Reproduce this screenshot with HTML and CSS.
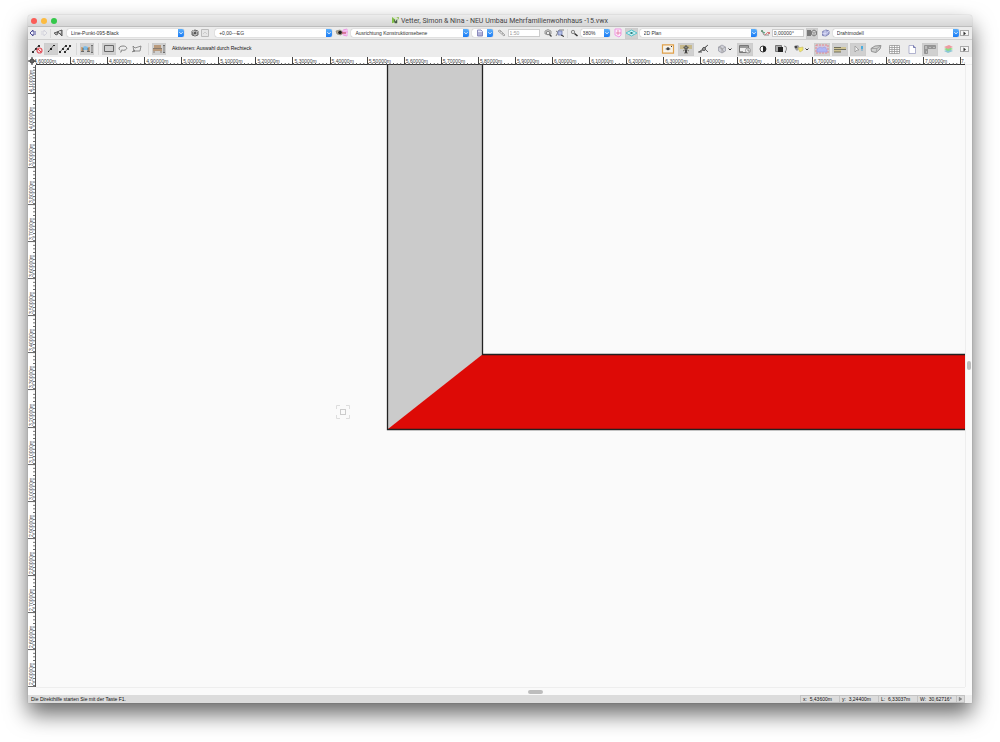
FILE: index.html
```
<!DOCTYPE html>
<html lang="de">
<head>
<meta charset="utf-8">
<title>Vetter, Simon &amp; Nina - NEU Umbau Mehrfamilienwohnhaus -15.vwx</title>
<link rel="stylesheet" href="styles.css">
</head>
<body>
<main class="window">
  <header class="titlebar">
    <div class="lights">
      <button class="light close" aria-label="Schließen"></button>
      <button class="light minimize" aria-label="Minimieren"></button>
      <button class="light maximize" aria-label="Vergrößern"></button>
    </div>
    <h1 class="title">
      <svg class="file-icon" viewBox="0 0 8 8"><path d="M0 0H6L8 2V8H0Z" fill="#dfe6d5"/><path d="M0 0L4 3L3 6L0 7Z" fill="#7fbe45"/><path d="M2 2L4 5L6 2V7H3Z" fill="#46584a"/><path d="M5 0L8 3V0Z" fill="#9ec46d"/></svg>
      <span>Vetter, Simon &amp; Nina - NEU Umbau Mehrfamilienwohnhaus -15.vwx</span>
    </h1>
  </header>

  <nav class="bar view-bar" aria-label="Darstellung">
    <button class="tool" aria-label="Zurück"><svg viewBox="0 0 10 10"><path d="M8 4H5V2L2 5L5 8V6H8" fill="#f3f3ff" stroke="#4b4b92"/></svg></button>
    <button class="tool" aria-label="Vor"><svg viewBox="0 0 10 10"><path d="M2 4H5V2L8 5L5 8V6H2" fill="#eee" stroke="#d3d3dc"/></svg></button>
    <span class="line"></span>
    <button class="tool w12" aria-label="Klassen"><svg viewBox="0 0 12 10"><path d="M2 5L5 4L6 6L4 7Z" fill="#aaa" stroke="#666"/><path d="M5 4L10 2V8L7 5Z" fill="#999" stroke="#555"/><circle cx="8" cy="4" r="1" fill="#eee"/></svg></button>
    <label class="combo wide after-m"><select aria-label="Klasse"><option>Line-Punkt-095-Black</option></select><span class="arrow"><svg viewBox="0 0 6 8"><path d="M1.500 3.300L3 4.800L4.500 3.300" fill="none" stroke="#fff"/></svg></span></label>
    <button class="tool after-l" aria-label="Ebenen"><svg viewBox="0 0 10 10"><path d="M5 2L8 3V7L5 8L2 7V3Z" fill="#999" stroke="#666"/><path d="M2 3L5 5L8 3M5 5V8M3 2L7 7" fill="none" stroke="#ddd" stroke-width=".7"/><circle cx="5" cy="5" r="1" fill="#333"/></svg></button>
    <button class="tool w8" aria-label="Ebene wählen"><svg viewBox="0 0 8 10"><path d="M.5 1.500H7.500V8.500H.5Z" fill="#e6e6e6" stroke="#bbb"/><path d="M2 6L4 4L6 6" fill="none" stroke="#ccc"/></svg></button>
    <label class="combo wide after-l"><select aria-label="Ebene"><option>+0,00---EG</option></select><span class="arrow"><svg viewBox="0 0 6 8"><path d="M1.500 3.300L3 4.800L4.500 3.300" fill="none" stroke="#fff"/></svg></span></label>
    <button class="tool w14 after-m" aria-label="Arbeitsebene"><svg viewBox="0 0 14 10"><path d="M1 3L5 2L8 4L6 7L2 6Z" fill="#b7a58c" stroke="#887" stroke-width=".7"/><circle cx="5" cy="4.500" r="1.800" fill="#222"/><path d="M8 2L12 1V8L8 7ZM7 4H13M10 1V8" fill="#fbe6fa" stroke="#ee8fe2" stroke-width=".8"/><path d="M7 5H11" stroke="#a22" stroke-width=".8"/></svg></button>
    <label class="combo wide after-s"><select aria-label="Ausrichtung"><option>Ausrichtung Konstruktionsebene</option></select><span class="arrow"><svg viewBox="0 0 6 8"><path d="M1.500 3.300L3 4.800L4.500 3.300" fill="none" stroke="#fff"/></svg></span></label>
    <button class="combo page-menu after-m" aria-label="Plan"><svg class="page" viewBox="0 0 8 8"><path d="M1.500 1H5L6.500 2.500V7H1.500Z" fill="#e5e6fa" stroke="#8a8abc"/><path d="M2 4H6M2 6H6" stroke="#6a6aa8" stroke-width=".8"/></svg><span class="arrow"><svg viewBox="0 0 6 8"><path d="M1.500 3.300L3 4.800L4.500 3.300" fill="none" stroke="#fff"/></svg></span></button>
    <button class="tool w11 after-m" aria-label="Maßstab"><svg viewBox="0 0 11 10"><path d="M2 3L4 2L9 7L8 8Z" fill="#ddd" stroke="#aaa"/><path d="M4 4L5 3M6 6L7 5" stroke="#999" stroke-width=".7"/></svg></button>
    <input class="field faded" aria-label="Maßstab" value="1:50">
    <button class="tool after-m" aria-label="Zoom Objekt"><svg viewBox="0 0 10 10"><path d="M2 3L5 1.500L8 3V6H2Z" fill="#ddd" stroke="#999"/><circle cx="5" cy="5" r="1.800" fill="#eee" stroke="#666" stroke-width=".8"/><path d="M6.500 6.500L8.500 8.500" stroke="#444" stroke-width="1.300"/></svg></button>
    <button class="tool w12" aria-label="Zoom Auswahl"><svg viewBox="0 0 12 10"><path d="M2 8L5 2L10 2M2 3L9 8" fill="none" stroke="#666" stroke-width=".8"/><path d="M4 3H8V7H4Z" fill="#b4bfe6" stroke="#7480b5" stroke-width=".8"/><path d="M7 7L10 8.500" stroke="#333"/></svg></button>
    <span class="line"></span>
    <button class="tool" aria-label="Zoom"><svg viewBox="0 0 10 10"><circle cx="4" cy="4" r="1.700" fill="#ddd" stroke="#888"/><path d="M5.500 5.500L8.500 8" stroke="#333" stroke-width="1.600"/></svg></button>
    <label class="combo zoom after-s"><select aria-label="Zoomfaktor"><option>380%</option></select><span class="arrow"><svg viewBox="0 0 6 8"><path d="M1.500 3.300L3 4.800L4.500 3.300" fill="none" stroke="#fff"/></svg></span></label>
    <button class="tool w12 after-s" aria-label="Ansicht drehen"><svg viewBox="0 0 12 10"><path d="M3 1H9V7L7 9L3 7Z" fill="#fdeafb" stroke="#ee90e2" stroke-width=".9"/><path d="M4 5H9M6 2V7" stroke="#e06c95" stroke-width=".7"/></svg></button>
    <button class="tool w13 on" aria-label="Konstruktionsebene"><svg viewBox="0 0 13 10"><path d="M1 5L6.500 2L12 5L6.500 8Z" fill="#d5f4f5" stroke="#4bc0c8" stroke-width=".9"/><path d="M4 3.500L9 6.500M9 3.500L4 6.500" stroke="#4bc0c8" stroke-width=".7"/><circle cx="6.500" cy="5" r="1" fill="#377"/></svg></button>
    <label class="combo wide after-s"><select aria-label="Ansicht"><option>2D Plan</option></select><span class="arrow"><svg viewBox="0 0 6 8"><path d="M1.500 3.300L3 4.800L4.500 3.300" fill="none" stroke="#fff"/></svg></span></label>
    <button class="tool w11 after-m" aria-label="Winkel"><svg viewBox="0 0 11 10"><path d="M2 3L4 7L9 7" fill="none" stroke="#777" stroke-width=".8"/><path d="M5 7L8 4" stroke="#d66" stroke-width=".8"/><path d="M3 4L5 5" stroke="#3a9a6a"/><circle cx="2" cy="3" r="1" fill="#586"/><circle cx="9" cy="5" r="1" fill="#c55"/></svg></button>
    <input class="field" aria-label="Drehwinkel" value="0,00000°">
    <button class="tool w12 on after-s" aria-label="Projektion"><svg viewBox="0 0 12 10"><path d="M2 2V8M4 2V8" stroke="#222"/><path d="M8 2L10.500 3.500V6.500L8 8L5.500 6.500V3.500Z" fill="#ccc" stroke="#666" stroke-width=".8"/><path d="M5.500 3.500L8 5L10.500 3.500M8 5V8" fill="none" stroke="#888" stroke-width=".7"/></svg></button>
    <button class="tool w11 after-s" aria-label="Rendern"><svg viewBox="0 0 11 10"><path d="M2.500 3.500L6 2L9 3V6L6 8L2.500 7.500Z" fill="#aeb2dc" stroke="#8084b5"/><path d="M2 5C4 6 7 6 9 3M5 2V8" fill="none" stroke="#e8e8ff" stroke-width=".7"/></svg></button>
    <label class="combo widest after-s"><select aria-label="Darstellungsart"><option>Drahtmodell</option></select><span class="arrow"><svg viewBox="0 0 6 8"><path d="M1.500 3.300L3 4.800L4.500 3.300" fill="none" stroke="#fff"/></svg></span></label>
    <button class="more" aria-label="Weitere"><svg viewBox="0 0 7 5"><path d="M2.500 .5L5 2.500L2.500 4.500Z" fill="#333"/></svg></button>
  </nav>

  <nav class="bar mode-bar" aria-label="Methoden">
    <div class="modes">
      <button class="mode" aria-label="Kein Skalieren"><svg viewBox="0 0 14 12"><path d="M3 9L9 2" stroke="#555" stroke-width=".8"/><path d="M2 8H4V10H2ZM5 5H7V7H5ZM8 2H10V4H8Z" fill="#333"/><circle cx="9.500" cy="7.500" r="2.500" fill="#f7d9d9" stroke="#e25660" stroke-width="1.200"/><path d="M8 6L11 9" stroke="#df4450"/></svg></button>
      <button class="mode on" aria-label="Einfaches Skalieren"><svg viewBox="0 0 14 12"><path d="M4 9L10 2" stroke="#555" stroke-width=".8"/><path d="M4 8H5V9H4ZM6 5H8V7H6ZM9 2H11V3H9Z" fill="#222"/></svg></button>
      <button class="mode" aria-label="Mehrfaches Skalieren"><svg viewBox="0 0 14 12"><path d="M2 9L8 2M7 9L13 2" stroke="#555" stroke-width=".8"/><path d="M1 8H3V10H1ZM4 5H6V7H4ZM7 2H9V4H7ZM6 8H8V10H6ZM9 5H11V7H9ZM11 2H13V4H11Z" fill="#333"/></svg></button>
      <span class="line"></span>
      <button class="mode on" aria-label="Wandverbindung"><svg viewBox="0 0 14 12"><path d="M1 4H3V8H1ZM8 4H10V8H8Z" fill="#c9a680"/><path d="M3 4L5 3L8 4V7H3Z" fill="#7ebbe4"/><path d="M1 8.500H4M7 8.500H10M3 5V9M8 5V9" stroke="#555" stroke-width=".8"/><path d="M12 2V10M11 3L12 2L13 3M11 9L12 10L13 9" fill="none" stroke="#555" stroke-width=".7"/></svg></button>
      <span class="line"></span>
      <button class="mode on" aria-label="Rechteck"><svg viewBox="0 0 14 12"><path d="M2.500 2.500H11.500V8.500H2.500Z" fill="none" stroke="#666"/></svg></button>
      <button class="mode" aria-label="Lasso"><svg viewBox="0 0 14 12"><path d="M4 7C2 6 3 3 7 3C11 3 12 6 9 7C7 8 5 6 5 8C6 9 5 9 4 9" fill="none" stroke="#777" stroke-width=".9"/></svg></button>
      <button class="mode" aria-label="Polygon"><svg viewBox="0 0 14 12"><path d="M4 9L3 3L5 5L11 3L10 8H4Z" fill="none" stroke="#777" stroke-width=".8"/><path d="M2 9L5 7" stroke="#666" stroke-width=".8"/></svg></button>
      <span class="line"></span>
      <button class="mode on" aria-label="Objekte verschieben"><svg viewBox="0 0 14 12"><path d="M2 2H9V5H2ZM1 6H10V8H1Z" fill="#b99a7c"/><path d="M1 5.500H10M2 8V10M9 8V10" stroke="#765" stroke-width=".8"/><path d="M12 2V10M11 3L12 2L13 3M11 9L12 10L13 9" fill="none" stroke="#555" stroke-width=".7"/></svg></button>
      <p class="hint">Aktivieren: Auswahl durch Rechteck</p>
    </div>
    <div class="options">
      <button class="option" aria-label="Sichtbarkeit"><svg viewBox="0 0 16 12"><path d="M2.500 1.800H13.500V10.200H2.500Z" fill="#f7f3ea" stroke="#dfa04a" stroke-width="1.200"/><path d="M5 6Q8 3 11 6Q8 8 5 6Z" fill="#9ba0a5"/><circle cx="8" cy="5.700" r="1.500" fill="#444"/><path d="M11.500 3V4" stroke="#333"/></svg></button>
      <button class="option on" aria-label="Intelligenter Zeiger"><svg viewBox="0 0 16 12"><path d="M2 2H14V6H2Z" fill="#c7b98c"/><path d="M8 2V10M5 4L11 8M11 4L5 8M6 10H10" stroke="#665" stroke-width=".8"/><circle cx="8" cy="4.500" r="1.500" fill="#888" stroke="#444" stroke-width=".8"/><path d="M7 7H9V10H7Z" fill="#444"/></svg></button>
      <button class="option" aria-label="Fangen"><svg viewBox="0 0 16 12"><path d="M3 9L12 2M7 4L12 9M3 9L7 7L12 2" stroke="#666" fill="none"/><circle cx="8" cy="6" r="1.500" fill="#aaa" stroke="#555"/><path d="M2 9H6" stroke="#555"/></svg></button>
      <button class="option menu" aria-label="Würfel"><svg viewBox="0 0 21 12"><path d="M8 2L11.500 4V8L8 10L4.500 8V4Z" fill="#cfd0d8" stroke="#9c9da8" stroke-width=".8"/><path d="M4.500 4L8 6L11.500 4M8 6V10M6 3L10 9" fill="none" stroke="#999" stroke-width=".7"/><path d="M14.500 5.500L16 7L17.500 5.500" fill="none" stroke="#333"/></svg></button>
      <button class="option on" aria-label="Letzte Ansicht"><svg viewBox="0 0 16 12"><path d="M2.500 2.500H11.500V9.500H2.500Z" fill="#eee" stroke="#777"/><path d="M3 3H11V5H3ZM3 8H6V9H3Z" fill="#999"/><circle cx="11" cy="7.500" r="2.500" fill="#eee" stroke="#888" stroke-width=".8"/><path d="M11 6V8H13" fill="none" stroke="#666" stroke-width=".7"/></svg></button>
      <button class="option" aria-label="Kontrast"><svg viewBox="0 0 16 12"><circle cx="8" cy="6" r="3" fill="#fff" stroke="#444"/><path d="M8 3A3 3 0 0 1 8 9Z" fill="#222"/></svg></button>
      <button class="option" aria-label="Reihenfolge"><svg viewBox="0 0 16 12"><path d="M2.500 2.500H8.500V8.500H2.500Z" fill="#aaa" stroke="#777"/><path d="M5 4H10V9H5Z" fill="#222"/><path d="M11 3Q14 3 13.500 6Q13 8 12 9M13 8L12 9L13 10" fill="none" stroke="#777" stroke-width=".8"/></svg></button>
      <button class="option menu" aria-label="Beleuchtung"><svg viewBox="0 0 21 12"><path d="M3 3L7 2L9 5L6 8L4 6Z" fill="#9e9ea2"/><circle cx="5" cy="4" r="1.300" fill="#444"/><path d="M7 5L12 4L12 7L9 9Z" fill="#f2e66b" stroke="#c8bf76" stroke-width=".7"/><path d="M14.500 5.500L16 7L17.500 5.500" fill="none" stroke="#333"/></svg></button>
      <button class="option on" aria-label="Begrenzung"><svg viewBox="0 0 16 12"><path d="M2 2H14V10H2Z" fill="#d6c6da" stroke="#e88085" stroke-width=".9" stroke-dasharray="2 1"/><path d="M3 9V6L6 4L8 5L11 4L13 7V9Z" fill="#b0b6f5" stroke="#9d9fe3" stroke-width=".7"/></svg></button>
      <button class="option on" aria-label="Wände"><svg viewBox="0 0 16 12"><path d="M2 4H14V6H2ZM2 7H9V9H2Z" fill="#cfc393"/><path d="M2 4.500H9M2 6.500H14M2 9H9" stroke="#665" stroke-width=".9"/></svg></button>
      <button class="option on" aria-label="Zeigerinfo"><svg viewBox="0 0 16 12"><path d="M5 3V9L7 7H9Z" fill="#f3f3f3" stroke="#999" stroke-width=".8"/><path d="M11 3H13V6H11Z" fill="#4badde"/><path d="M12 6V8" stroke="#6aa2c5"/></svg></button>
      <button class="option" aria-label="Extrusion"><svg viewBox="0 0 16 12"><path d="M3 5.500L7 3L13 2.500L12 6L8 9.500L3.500 8.500Z" fill="#d0d1d0" stroke="#888" stroke-width=".9"/><path d="M3 5.500H9L13 2.500M9 5.500L8 9" fill="none" stroke="#999" stroke-width=".8"/></svg></button>
      <button class="option" aria-label="Raster"><svg viewBox="0 0 16 12"><path d="M3.500 2.500H13.500V10.500H3.500ZM6 2V11M8.500 2V11M11 2V11M3 4.500H14M3 6.500H14M3 8.500H14" fill="#fff" stroke="#999" stroke-width=".8"/></svg></button>
      <button class="option" aria-label="Blatt"><svg viewBox="0 0 16 12"><path d="M5 2.500H9.500L11.500 4.500V10.500H5Z" fill="#fff" stroke="#a0a2c5" stroke-width=".8"/><path d="M9.500 2.500V4.500H11.500" fill="none" stroke="#666ca8" stroke-width=".9"/></svg></button>
      <button class="option on" aria-label="Lineal"><svg viewBox="0 0 16 12"><path d="M2.500 2.500H13.500V5.500H5.500V10.500H2.500Z" fill="#bbb" stroke="#888" stroke-width=".8"/><path d="M6 3V5M8 3V4M10 3V5M12 3V4M3 7H5M3 9H4" stroke="#555" stroke-width=".7"/></svg></button>
      <button class="option" aria-label="Ebenenstapel"><svg viewBox="0 0 16 12"><path d="M4 8L9 6L13 8L8 10Z" fill="#8cc8d4"/><path d="M4 6L9 4L13 6L8 8Z" fill="#8adc86"/><path d="M4 4L9 2L13 4L8 6Z" fill="#ee9b9f"/></svg></button>
      <button class="more" aria-label="Weitere"><svg viewBox="0 0 7 5"><path d="M2.500 .5L5 2.500L2.500 4.500Z" fill="#333"/></svg></button>
    </div>
  </nav>

  <section class="workspace">
    <div class="corner"><svg viewBox="0 0 8 8"><circle cx="4" cy="4" r="2" fill="#fff" stroke="#333"/><path d="M4 0V8M0 4H8" stroke="#333"/></svg></div>
    <div class="ruler-x">
      <span class="first">4,60000m</span><span>4,70000m</span><span>4,80000m</span><span>4,90000m</span><span>5,00000m</span><span>5,10000m</span><span>5,20000m</span><span>5,30000m</span><span>5,40000m</span><span>5,50000m</span><span>5,60000m</span><span>5,70000m</span><span>5,80000m</span><span>5,90000m</span><span>6,00000m</span><span>6,10000m</span><span>6,20000m</span><span>6,30000m</span><span>6,40000m</span><span>6,50000m</span><span>6,60000m</span><span>6,70000m</span><span>6,80000m</span><span>6,90000m</span><span>7,00000m</span><span class="last">7,</span>
    </div>
    <div class="ruler-end"></div>
    <div class="ruler-y">
      <span>4,10000m</span><span>4,00000m</span><span>3,90000m</span><span>3,80000m</span><span>3,70000m</span><span>3,60000m</span><span>3,50000m</span><span>3,40000m</span><span>3,30000m</span><span>3,20000m</span><span>3,10000m</span><span>3,00000m</span><span>2,90000m</span><span>2,80000m</span><span>2,70000m</span><span>2,60000m</span><span>2,50000m</span>
    </div>
    <svg class="drawing" role="img" aria-label="Wandecke">
      <rect x="352" y="-5" width="94" height="370" fill="#cbcbcb"/>
      <path d="M352 364L447 289H4000V364Z" fill="#dd0a06"/>
      <path d="M351.500 -2V364.500H4000" fill="none" stroke="#222" stroke-width="1.300"/>
      <path d="M446.500 -2V289.500H4000" fill="none" stroke="#222" stroke-width="1.300"/>
      <rect x="304.500" y="344.500" width="5" height="5" fill="none" stroke="#ccc"/>
      <path d="M300.500 344V340.500H304M310 340.500H313.500V344M313.500 350V353.500H310M304 353.500H300.500V350" fill="none" stroke="#ddd"/>
    </svg>
    <div class="scroll-y"><span class="thumb-y"></span></div>
    <div class="ruler-foot"></div>
    <div class="scroll-x"><span class="thumb-x"></span></div>
    <div class="scroll-corner"></div>
  </section>

  <footer class="status">
    <p class="help">Die Direkthilfe starten Sie mit der Taste F1.</p>
    <output class="cell">x:&nbsp; 5,43600m</output>
    <output class="cell">y:&nbsp; 3,24400m</output>
    <output class="cell">L:&nbsp; 6,33037m</output>
    <output class="cell">W:&nbsp; 30,62716°</output>
    <button class="expand" aria-label="Mehr"><svg viewBox="0 0 8 6"><path d="M2.500 1L5.500 3L2.500 5Z" fill="#888" stroke="#666" stroke-width=".5"/></svg></button>
    <span class="grip"></span>
  </footer>
</main>
</body>
</html>
```

FILE: styles.css
```
* { box-sizing: border-box; }

body {
  margin: 0;
  background: #fff;
  color: #222;
  font: 5px/7px "Liberation Sans", Arial, sans-serif;
}

h1, p { margin: 0; font: inherit; }
svg { display: block; }

button {
  display: flex;
  align-items: center;
  justify-content: center;
  margin: 0;
  padding: 0;
  border: 0;
  background: none;
  color: inherit;
  font: inherit;
}

.window {
  display: flex;
  flex-direction: column;
  height: calc(100vh - 54px);
  margin: 15px 28px 39px;
  overflow: hidden;
  border-radius: 3px 3px 1px 1px;
  background: #ececec;
  box-shadow: 0 11px 22px rgba(0, 0, 0, .6), 0 0 1px rgba(0, 0, 0, .4);
}

/* Title bar */
.titlebar {
  display: grid;
  grid-template-columns: 1fr auto 1fr;
  align-items: center;
  flex: none;
  height: 12px;
  padding: 0 3px;
  border-bottom: 1px solid #bdbdbd;
  background: linear-gradient(#ececec, #d6d6d6);
}
.lights { display: flex; gap: 4px; }
.light { width: 6px; height: 6px; border-radius: 50%; }
.close { background: #fb5d57; }
.minimize { background: #fcbb40; }
.maximize { background: #34c84a; }
.title {
  display: flex;
  align-items: center;
  gap: 2px;
  color: #444;
  font: 7px/10px Roboto, "Liberation Sans", sans-serif;
}
.file-icon { width: 7px; height: 7px; }

/* Toolbars */
.bar { display: flex; align-items: center; flex: none; padding: 0 3px 0 0; }
.view-bar { gap: 1px; height: 13px; border-bottom: 1px solid #cfcfcf; }
.mode-bar { justify-content: space-between; height: 17px; }
.modes, .options { display: flex; align-items: center; }
.modes { padding-left: 2px; }
.options { gap: 2px; padding-top: 1px; }

.tool { flex: none; width: 10px; height: 11px; }
.tool svg { width: 100%; height: 10px; }
.w8 { width: 8px; }
.w11 { width: 11px; }
.w12 { width: 12px; }
.w13 { width: 13px; }
.w14 { width: 14px; }
.on { background: #d0d0d0; box-shadow: inset 0 0 1px #bbb; }

.after-s { margin-left: 1px; }
.after-m { margin-left: 2px; }
.after-l { margin-left: 5px; }

.line { flex: none; width: 1px; height: 9px; background: #d8d8d8; }
.modes .line { margin: 0 3px 0 4px; height: 12px; }

.combo {
  display: flex;
  height: 8px;
  overflow: hidden;
  border-radius: 2px;
  background: #fff;
  box-shadow: 0 0 1px #888;
}
.wide { flex: 1 1 117px; min-width: 0; }
.widest { flex: 1 1 126px; min-width: 0; }
.zoom { flex: none; width: 29px; }
.page-menu { flex: none; justify-content: space-between; width: 21px; }
.page { width: 8px; height: 8px; margin-left: 4px; }
.combo select {
  flex: 1;
  min-width: 0;
  padding: 0 0 0 4px;
  border: 0;
  appearance: none;
  background: none;
  color: #333;
  font: 5px/8px "Liberation Sans", Arial, sans-serif;
}
.zoom select { padding-left: 2px; }
.arrow { flex: none; width: 6px; height: 8px; background: linear-gradient(#5db0fb, #1a7bf5); }
.arrow svg { width: 6px; height: 8px; }

.field {
  flex: none;
  width: 32px;
  height: 8px;
  padding: 0 1px;
  border: 1px solid #ccc;
  background: #fff;
  color: #333;
  font: 5px/6px "Liberation Sans", Arial, sans-serif;
}
.faded { color: #999; }

.more {
  flex: none;
  width: 9px;
  height: 6px;
  border: 1px solid #aaa;
  background: #f6f6f6;
}
.more svg { width: 7px; height: 5px; }
.options .more { margin-left: 2px; }

.mode { flex: none; width: 14px; height: 12px; }
.mode svg { width: 14px; height: 12px; }
.option { flex: none; width: 16px; height: 13px; }
.option svg { width: 100%; height: 12px; }
.menu { width: 21px; }
.hint { margin-left: 6px; color: #111; white-space: nowrap; }

/* Drawing area */
.workspace {
  display: grid;
  grid-template: 8px minmax(0, 1fr) 8px / 8px minmax(0, 1fr) 7px;
  flex: 1;
  min-height: 0;
  background: #fafafa;
}
.corner svg { width: 8px; height: 8px; }

.ruler-x {
  display: grid;
  grid-template-columns: 34px repeat(24, minmax(0, 1fr)) 5px;
  border-bottom: 1px solid #333;
  background: #fff;
}
.ruler-x span {
  padding-left: 1px;
  border-left: 1px solid #444;
  background: linear-gradient(90deg, #555 1px, transparent 1px) left bottom / 10% 2px repeat-x;
  color: #444;
  line-height: 8px;
}
.ruler-x .first { padding: 0; border: 0; text-indent: -2px; }
.ruler-x .last { padding: 0; background: none; }
.ruler-end { border-bottom: 1px solid #eee; }

.ruler-y {
  display: grid;
  grid-template-rows: 29px repeat(16, minmax(0, 1fr));
  overflow: hidden;
  border-right: 1px solid #555;
  background: #fff;
}
.ruler-y span {
  padding-top: 1px;
  border-top: 1px solid #666;
  background: linear-gradient(#666 1px, transparent 1px) left top / 2px 10% repeat-y;
  color: #444;
  line-height: 7px;
  writing-mode: vertical-rl;
  transform: rotate(180deg);
}

.drawing { width: 100%; height: 100%; overflow: hidden; }

.scroll-y {
  display: flex;
  align-items: center;
  justify-content: center;
  border-left: 1px solid #eee;
  padding-bottom: 22px;
}
.scroll-x {
  display: flex;
  align-items: center;
  justify-content: center;
  border-top: 1px solid #eee;
  padding-left: 70px;
}
.thumb-y { width: 4px; height: 9px; border-radius: 2px; background: #bdbdbd; }
.thumb-x { width: 15px; height: 4px; border-radius: 2px; background: #bdbdbd; }

/* Status bar */
.status {
  display: flex;
  flex: none;
  height: 8px;
  background: #dcdcdc;
  line-height: 8px;
}
.help { flex: 1; padding-left: 3px; color: #111; white-space: nowrap; }
.cell {
  flex: none;
  width: 39px;
  padding-left: 2px;
  border: 1px solid #c3c3c3;
  border-width: 1px 0 1px 1px;
  color: #111;
  line-height: 6px;
  white-space: nowrap;
}
.expand { width: 9px; border: 1px solid #c3c3c3; }
.expand svg { width: 8px; height: 6px; }
.grip { width: 7px; background: #eee; }
```
